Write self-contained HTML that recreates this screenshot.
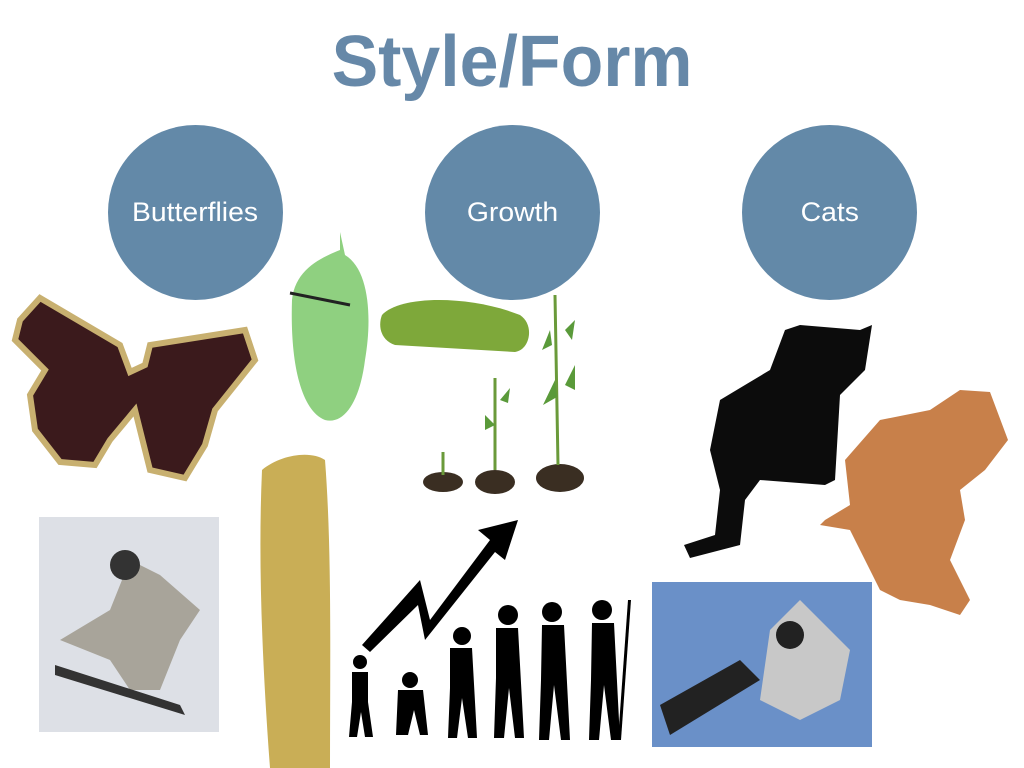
<!DOCTYPE html>
<html><head><meta charset="utf-8"><style>
html,body{margin:0;padding:0;background:#fff;width:1024px;height:768px;overflow:hidden;position:relative;font-family:"Liberation Sans",sans-serif}
.t{position:absolute;left:0;width:1024px;top:22px;text-align:center;font-weight:bold;font-size:72px;color:#6688a8;line-height:80px}
.t span{display:inline-block;transform:scaleX(0.97)}
.c{position:absolute;width:175px;height:175px;border-radius:50%;background:#6389a8;color:#fff;font-size:27px;display:flex;align-items:center;justify-content:center;top:125px}
.c span{display:inline-block;transform:scaleX(1.05)}
svg{position:absolute;left:0;top:0}
</style></head><body>
<div class="t"><span>Style/Form</span></div>
<div class="c" style="left:108px"><span>Butterflies</span></div>
<div class="c" style="left:425px"><span>Growth</span></div>
<div class="c" style="left:742px"><span>Cats</span></div>
<svg width="1024" height="768" viewBox="0 0 1024 768">
<path d="M20 320 L40 298 L120 345 L130 372 L145 365 L150 345 L245 330 L255 360 L215 410 L205 445 L185 478 L150 470 L135 410 L110 440 L95 465 L60 462 L35 430 L30 395 L45 370 L15 340Z" fill="#3b1a1c" stroke="#c8b070" stroke-width="6"/>
<path d="M340 232 L345 255 C370 270 372 320 365 360 C360 400 345 425 325 420 C300 410 290 360 292 300 C295 270 320 258 340 250Z" fill="#8fd080"/>
<path d="M290 293 L350 305" stroke="#222" stroke-width="3"/>
<path d="M382 315 C400 295 470 295 520 315 C535 325 530 350 515 352 L395 345 C380 340 378 325 382 315Z" fill="#7ea83a"/>
<ellipse cx="443" cy="482" rx="20" ry="10" fill="#3a2e22"/>
<ellipse cx="495" cy="482" rx="20" ry="12" fill="#3a2e22"/>
<ellipse cx="560" cy="478" rx="24" ry="14" fill="#3a2e22"/>
<path d="M443 475 L443 452 M495 470 L495 378 M558 465 L555 295" stroke="#6a9a3a" stroke-width="3"/>
<path d="M550 330 l-8 20 l10 -5Z M565 330 l10 -10 l-3 20Z M555 380 l-12 25 l14 -8Z M565 385 l10 -20 l0 25Z M485 430 l10 -5 l-10 -10Z M500 400 l10 -12 l-2 15Z" fill="#5a9a3a"/>
<path d="M785 330 L800 325 L860 330 L872 325 L865 370 L840 395 L835 480 L825 485 L760 480 L745 500 L740 545 L690 558 L684 545 L715 535 L720 490 L710 450 L720 400 L770 370 Z" fill="#0c0c0c"/>
<path d="M960 390 L990 392 L1008 440 L985 470 L960 490 L965 520 L950 560 L970 600 L960 615 L930 605 L900 600 L880 590 L850 530 L820 525 L825 520 L850 505 L845 460 L880 420 L930 410 Z" fill="#c8804a"/>
<rect x="39" y="517" width="180" height="215" fill="#dde0e6"/>
<path d="M60 640 L110 610 L130 560 L160 575 L200 610 L180 640 L160 690 L130 690 L110 660 Z" fill="#a8a49a"/>
<circle cx="125" cy="565" r="15" fill="#333"/>
<path d="M55 665 L180 705 L185 715 L55 675Z" fill="#333"/>
<path d="M262 470 C280 455 310 450 325 460 C332 550 330 660 330 768 L270 768 C262 660 258 560 262 470Z" fill="#c9ae56"/>
<path d="M362 645 L420 580 L430 620 L490 540 L478 530 L518 520 L505 560 L495 552 L425 640 L418 605 L370 652Z" fill="#000"/>
<g fill="#000">
<circle cx="360" cy="662" r="7"/><path d="M352 672 l16 0 l0 30 l5 35 l-8 0 l-4 -25 l-4 25 l-8 0 l3 -35Z"/>
<circle cx="410" cy="680" r="8"/><path d="M398 690 l25 0 l5 45 l-8 0 l-6 -25 l-6 25 l-12 0 Z"/>
<circle cx="462" cy="636" r="9"/><path d="M450 648 l22 0 l5 90 l-9 0 l-6 -40 l-5 40 l-9 0 l2 -50Z"/>
<circle cx="508" cy="615" r="10"/><path d="M496 628 l22 0 l6 110 l-9 0 l-6 -50 l-5 50 l-10 0 l2 -60Z"/>
<circle cx="552" cy="612" r="10"/><path d="M542 625 l22 0 l6 115 l-9 0 l-7 -55 l-5 55 l-10 0 l2 -60Z"/>
<circle cx="602" cy="610" r="10"/><path d="M592 623 l22 0 l6 117 l-9 0 l-7 -55 l-5 55 l-10 0 l2 -60Z"/>
<path d="M628 600 l3 0 l-10 140 l-3 0Z"/>
</g>
<rect x="652" y="582" width="220" height="165" fill="#6a90c8"/>
<path d="M770 630 L800 600 L850 650 L840 700 L800 720 L760 700Z" fill="#c8c8c8"/>
<path d="M660 705 L740 660 L760 680 L670 735Z" fill="#222"/>
<circle cx="790" cy="635" r="14" fill="#222"/>
</svg>
</body></html>
